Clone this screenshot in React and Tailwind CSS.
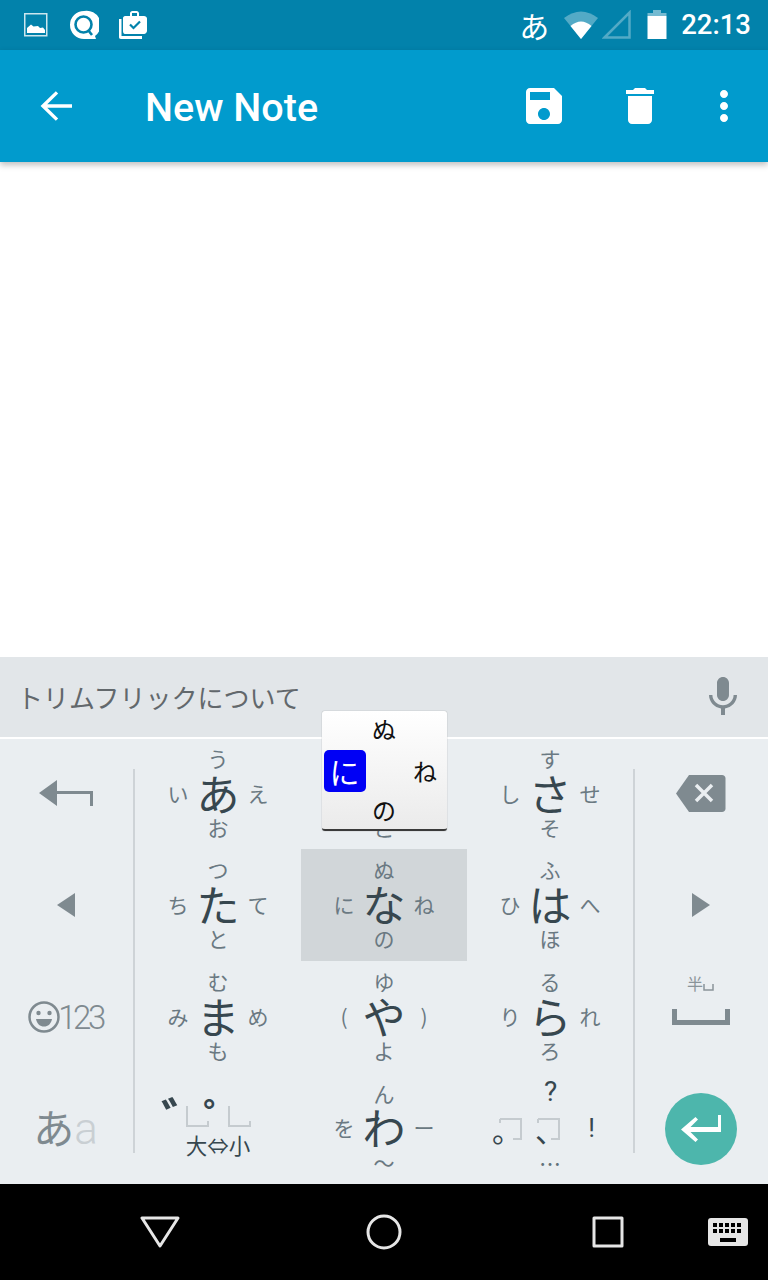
import React from 'react';

const cjk = "font-['Noto_Sans_CJK_JP','Roboto',sans-serif]";

// Flick keys, row by row (null = special key drawn by hand)
const keys = [
  { main: 'あ', up: 'う', left: 'い', right: 'え', down: 'お' },
  { main: 'か', up: 'く', left: 'き', right: 'け', down: 'こ' },
  { main: 'さ', up: 'す', left: 'し', right: 'せ', down: 'そ' },
  { main: 'た', up: 'つ', left: 'ち', right: 'て', down: 'と' },
  { main: 'な', up: 'ぬ', left: 'に', right: 'ね', down: 'の', active: true },
  { main: 'は', up: 'ふ', left: 'ひ', right: 'へ', down: 'ほ' },
  { main: 'ま', up: 'む', left: 'み', right: 'め', down: 'も' },
  { main: 'や', up: 'ゆ', left: '(', right: ')', down: 'よ' },
  { main: 'ら', up: 'る', left: 'り', right: 'れ', down: 'ろ' },
  null,
  { main: 'わ', up: 'ん', left: 'を', right: 'ー', down: '〜' },
  null,
];

const FlickKey = ({ main, up, left, right, down, active }) => (
  <div className={`flex items-center justify-center ${active ? 'bg-[#d1d6d9]' : ''}`}>
    <div className="-mt-[2px] grid grid-cols-[40px_40px_40px] grid-rows-[33px_36px_33px] place-items-center text-[21px] leading-none text-[#6a7982]">
      <span />
      <span>{up}</span>
      <span />
      <span>{left}</span>
      <span className="-mt-[2px] text-[43px] text-[#37474f]">{main}</span>
      <span>{right}</span>
      <span />
      <span>{down}</span>
      <span />
    </div>
  </div>
);

const DashBox = ({ flip }) => (
  <svg width="23" height="22" viewBox="0 0 23 22" fill="none" stroke="#c5cbcf" strokeWidth="2">
    {flip ? <path d="M1 1H22V21H14M1 1V5" /> : <path d="M1 1V21H22V16" />}
  </svg>
);

const SizeKey = () => (
  <div className="flex flex-col items-center justify-center">
    <div className="mb-[4px] flex flex-col items-center">
      <div className="relative flex gap-[19px] pt-[8px] ml-[1px]">
        <DashBox />
        <DashBox />
        <span className="absolute left-[-25px] top-[-4px] text-[50px] leading-none font-bold text-[#37474f]">゛</span>
        <span className="absolute left-[17px] top-[-2px] text-[42px] leading-none font-bold text-[#37474f]">゜</span>
      </div>
      <div className="mt-[6px] text-[21.500px] leading-[24px] text-[#37474f]">大⇔小</div>
    </div>
  </div>
);

const PunctKey = () => (
  <div className="-mt-[2px] grid grid-cols-[40px_40px_40px] grid-rows-[33px_36px_33px] place-items-center justify-center content-center text-[#37474f]">
    <span />
    <span className="-mt-[2px] ml-[1px] text-[28px] leading-none font-['Roboto',sans-serif]">?</span>
    <span />
    <div className="relative ml-[1px] mt-[3px]">
      <DashBox flip />
      <span className="absolute left-[-7px] top-[-4px] text-[30px] leading-none">。</span>
    </div>
    <div className="relative mr-[3px] mt-[3px]">
      <DashBox flip />
      <span className="absolute left-[-2px] top-[-4px] text-[30px] leading-none">、</span>
    </div>
    <span className="ml-[3px] text-[26px] leading-none font-['Roboto',sans-serif]">!</span>
    <span />
    <span className="text-[22px] leading-none text-[#62727b]">…</span>
    <span />
  </div>
);

const SideCell = ({ children }) => <div className="flex items-center justify-center">{children}</div>;

export default function App() {
  return (
    <div className={`relative w-[768px] h-[1280px] flex flex-col overflow-hidden bg-white ${cjk}`}>
      {/* status bar */}
      <div className="h-[50px] shrink-0 flex items-center bg-[#0282ab] text-white">
        <svg className="ml-[24px]" width="24" height="24" viewBox="0 0 24 24">
          <rect x="0.75" y="0.75" width="22" height="22" fill="none" stroke="#fff" strokeOpacity="0.8" strokeWidth="1.5" />
          <path d="M3 20V15L7 11.5L9.5 13.5L14 13L16 15L19 14.5L21 17V20Z" fill="#fff" />
        </svg>
        <svg className="ml-[21px]" width="30" height="30" viewBox="0 0 30 30">
          <path d="M15 1A14 14 0 1 0 15 29H27L26 26A14 14 0 0 0 15 1Z" fill="#fff" />
          <circle cx="14.5" cy="14.5" r="8" fill="none" stroke="#0282ab" strokeWidth="2.6" />
          <path d="M19 20L23 25" stroke="#0282ab" strokeWidth="2.6" />
        </svg>
        <svg className="ml-[19px]" width="30" height="30" viewBox="0 0 30 30" fill="#fff">
          <path d="M7 6H12V3.5C12 2 13 1 14.5 1H18.5C20 1 21 2 21 3.5V6H26C27.5 6 29 7 29 8.5V21C29 22.5 27.500 24 26 24H7C5.500 24 5 22.500 5 21V8C5 7 6 6 7 6ZM14 6H19V3H14Z" fillRule="evenodd" />
          <path d="M1 9H3.500V26H24V29H3C1.500 29 1 28 1 27Z" />
          <path d="M12 14.500L15.500 18L22 11.500" fill="none" stroke="#0282ab" strokeWidth="2.200" />
        </svg>
        <span className="ml-auto text-[30px] leading-none">あ</span>
        <svg className="ml-[14px]" width="36" height="30" viewBox="0 0 36 30">
          <path d="M1 8Q18 -5 35 8L18 29Z" fill="#fff" fillOpacity="0.32" />
          <path d="M7.500 16Q18 7 28.500 16L18 29Z" fill="#fff" />
        </svg>
        <svg className="ml-[3px]" width="30" height="30" viewBox="0 0 30 30" fill="none">
          <path d="M2.500 27.500L27.500 2.500V27.500Z" stroke="#fff" strokeOpacity="0.32" strokeWidth="2.500" />
        </svg>
        <svg className="ml-[15px]" width="20" height="30" viewBox="0 0 20 30">
          <path d="M6 0H14V3H19.500V6H0.500V3H6Z" fill="#fff" fillOpacity="0.45" />
          <path d="M0.500 6H19.500V29H0.500Z" fill="#fff" />
        </svg>
        <span className="ml-[14px] mr-[17px] text-[27.500px] leading-none font-['Roboto',sans-serif] font-medium">22:13</span>
      </div>

      {/* app bar */}
      <div className="relative z-10 h-[112px] shrink-0 flex items-center bg-[#019bcd] text-white shadow-[0_3px_6px_rgba(0,0,0,0.25)]">
        <svg className="ml-[32px]" width="48" height="48" viewBox="0 0 24 24" fill="none" stroke="#fff" strokeWidth="1.7">
          <path d="M20 12H6M12.500 5.200L5.500 12L12.500 18.800" />
        </svg>
        <h1 className="ml-[65px] mt-[4px] text-[39.500px] leading-none font-['Roboto',sans-serif] font-medium">New Note</h1>
        <svg className="ml-auto" width="48" height="48" viewBox="0 0 24 24" fill="#fff">
          <path d="M17 3H5c-1.110 0-2 .9-2 2v14c0 1.100.89 2 2 2h14c1.100 0 2-.9 2-2V7l-4-4zm-5 16c-1.660 0-3-1.340-3-3s1.340-3 3-3 3 1.340 3 3-1.340 3-3 3zm3-10H5V5h10v4z" />
        </svg>
        <svg className="ml-[48px]" width="48" height="48" viewBox="0 0 24 24" fill="#fff">
          <path d="M6 19c0 1.100.9 2 2 2h8c1.100 0 2-.9 2-2V7H6v12zM19 4h-3.500l-1-1h-5l-1 1H5v2h14V4z" />
        </svg>
        <svg className="ml-[36px] mr-[20px]" width="48" height="48" viewBox="0 0 24 24" fill="#fff">
          <path d="M12 8c1.100 0 2-.9 2-2s-.9-2-2-2-2 .9-2 2 .9 2 2 2zm0 2c-1.100 0-2 .9-2 2s.9 2 2 2 2-.9 2-2-.9-2-2-2zm0 6c-1.100 0-2 .9-2 2s.9 2 2 2 2-.9 2-2-.9-2-2-2z" />
        </svg>
      </div>

      {/* note body */}
      <div className="flex-1 bg-white" />

      {/* candidate bar */}
      <div className="h-[82px] shrink-0 flex items-center bg-[#e2e6e9] border-b-2 border-white pl-[17px] pr-[21px]">
        <span className="text-[26px] leading-none text-[#62686c]">トリムフリックについて</span>
        <svg className="ml-auto" width="48" height="48" viewBox="0 0 24 24" fill="#7f8a90">
          <path d="M12 14c1.660 0 2.990-1.340 2.990-3L15 5c0-1.660-1.340-3-3-3S9 3.340 9 5v6c0 1.660 1.340 3 3 3zm5.300-3c0 3-2.540 5.100-5.300 5.100S6.700 14 6.700 11H5c0 3.410 2.720 6.230 6 6.720V21h2v-3.280c3.280-.48 6-3.300 6-6.720h-1.700z" />
        </svg>
      </div>

      {/* keyboard */}
      <div className="h-[445px] shrink-0 flex bg-[#eaeef1]">
        <div className="w-[133px] pr-[2px] grid grid-rows-[110px_112px_112px_111px]">
          <SideCell>
            <svg className="-mt-[2px]" width="54" height="26" viewBox="0 0 54 26" fill="#7f8a90">
              <path d="M0 13L18 0V11H54V26H51V14H18V26Z" />
            </svg>
          </SideCell>
          <SideCell>
            <svg width="18" height="24" viewBox="0 0 18 24" fill="#7f8a90"><path d="M18 0V24L0 12Z" /></svg>
          </SideCell>
          <SideCell>
            <div className="flex items-center text-[#7f8a90]">
              <svg width="32" height="32" viewBox="0 0 32 32">
                <circle cx="16" cy="16" r="14.500" fill="none" stroke="#7f8a90" strokeWidth="2.500" />
                <circle cx="10.500" cy="12" r="2.200" fill="#7f8a90" />
                <circle cx="21.500" cy="12" r="2.200" fill="#7f8a90" />
                <path d="M8 18H24C23 23 20 25.500 16 25.500S9 23 8 18Z" fill="#7f8a90" />
              </svg>
              <span className="-ml-[2px] text-[33px] leading-none tracking-[-3.500px] font-light font-['Roboto',sans-serif]">123</span>
            </div>
          </SideCell>
          <SideCell>
            <div className="flex items-baseline text-[#7f8a90]">
              <span className="text-[41px] leading-none">あ</span>
              <span className="text-[44px] leading-none font-light text-[#c9cfd3] font-['Roboto',sans-serif]">a</span>
            </div>
          </SideCell>
        </div>

        <div className="w-[2px] mt-[30px] mb-[31px] bg-[#ced3d7]" />

        <div className="w-[498px] grid grid-cols-3 grid-rows-[110px_112px_112px_111px]">
          {keys.map((k, i) => {
            if (k) return <FlickKey key={i} {...k} />;
            return i === 9 ? <SizeKey key={i} /> : <PunctKey key={i} />;
          })}
        </div>

        <div className="w-[2px] mt-[30px] mb-[31px] bg-[#ced3d7]" />

        <div className="w-[133px] pr-[2px] grid grid-rows-[110px_112px_112px_111px]">
          <SideCell>
            <svg className="-mt-[2px]" width="50" height="37" viewBox="0 0 50 37">
              <path d="M13 0H46C48 0 49.500 1.500 49.500 3.500V33.500C49.500 35.500 48 37 46 37H13L0 18.500Z" fill="#7f8a90" />
              <path d="M20 10L36 26M36 10L20 26" stroke="#eaeef1" strokeWidth="3.500" />
            </svg>
          </SideCell>
          <SideCell>
            <svg width="18" height="24" viewBox="0 0 18 24" fill="#7f8a90"><path d="M0 0V24L18 12Z" /></svg>
          </SideCell>
          <SideCell>
            <div className="flex flex-col items-center mb-[34px]">
              <div className="flex items-end">
                <span className="text-[16px] leading-none text-[#8a9499]">半</span>
                <svg width="11" height="7" viewBox="0 0 11 7" fill="none" stroke="#8a9499" strokeWidth="1.500"><path d="M1 0V6H10V0" /></svg>
              </div>
              <svg className="mt-[18px]" width="58" height="16" viewBox="0 0 58 16" fill="#7f8a90">
                <path d="M0 0H5V11H53V0H58V16H0Z" />
              </svg>
            </div>
          </SideCell>
          <SideCell>
            <div className="w-[72px] h-[72px] rounded-full bg-[#4db6ac] flex items-center justify-center">
              <svg width="40" height="28" viewBox="0 0 40 28" fill="#fff">
                <path d="M37 0H40V17H9.500L17 24.500L14.500 27L0 14.500L14.500 2L17 4.500L9.500 12H37Z" />
              </svg>
            </div>
          </SideCell>
        </div>
      </div>

      {/* nav bar */}
      <div className="h-[96px] shrink-0 flex items-center bg-black">
        <svg className="ml-[140px]" width="40" height="32" viewBox="0 0 40 32" fill="none" stroke="#e6e6e6" strokeWidth="3" strokeLinejoin="round">
          <path d="M2 2H38L20 30Z" />
        </svg>
        <svg className="ml-[186px]" width="36" height="36" viewBox="0 0 36 36" fill="none" stroke="#e6e6e6" strokeWidth="3">
          <circle cx="18" cy="18" r="16" />
        </svg>
        <svg className="ml-[190px]" width="32" height="32" viewBox="0 0 32 32" fill="none" stroke="#e6e6e6" strokeWidth="3" strokeLinejoin="round">
          <rect x="2" y="2" width="28" height="28" />
        </svg>
        <svg className="ml-[84px]" width="40" height="28" viewBox="0 0 40 28">
          <rect width="40" height="28" rx="3" fill="#e6e6e6" />
          <path d="M5 5h4v4H5zM11 5h4v4h-4zM17 5h4v4h-4zM23 5h4v4h-4zM29 5h4v4h-4zM5 11h4v4H5zM11 11h4v4h-4zM17 11h4v4h-4zM23 11h4v4h-4zM29 11h4v4h-4zM12 20h16v4H12z" fill="#000" />
        </svg>
      </div>

      {/* flick popup over the か key */}
      <div className="absolute left-[322px] top-[711px] w-[125px] h-[120px] rounded-[3px] bg-gradient-to-b from-white to-[#ebebeb] border-b-2 border-[#3a3a3a] shadow-[0_0_1px_rgba(0,0,0,0.5)] text-[24px] leading-none text-[#111]">
        <div className="grid grid-cols-[43px_38px_44px] grid-rows-[39px_42px_39px] place-items-center">
          <span />
          <span className="-mt-[4px]">ぬ</span>
          <span />
          <span className="w-[42px] h-[42px] ml-[2px] rounded-[5px] bg-[#0000f5] text-white text-[30px] flex items-center justify-center">に</span>
          <span />
          <span>ね</span>
          <span />
          <span className="-mt-[4px]">の</span>
          <span />
        </div>
      </div>
    </div>
  );
}
